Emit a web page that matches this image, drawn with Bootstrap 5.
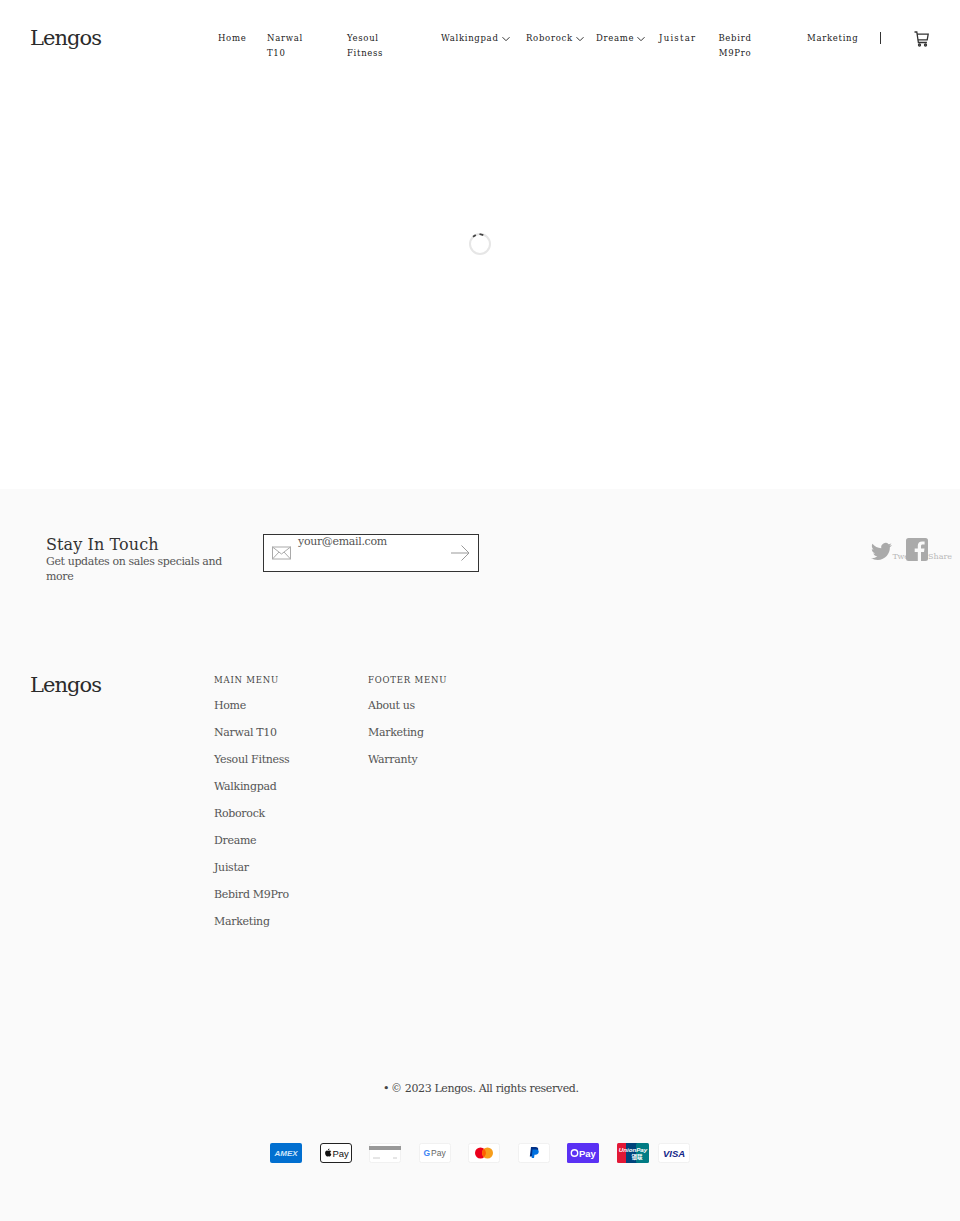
<!DOCTYPE html>
<html lang="en">
<head>
<meta charset="UTF-8">
<meta name="viewport" content="width=device-width, initial-scale=1.0">
<link href="https://cdn.jsdelivr.net/npm/bootstrap@5.3.0/dist/css/bootstrap.min.css" rel="stylesheet">
<title>Lengos</title>
<style>
body { font-family: "DejaVu Serif", "Liberation Serif", serif; color: #333; background: #fff; font-size: 12px; }
a { color: inherit; text-decoration: none; }
.site-head { height: 78px; padding: 0 30px; }
.brand-logo { font-size: 21px; line-height: 30px; color: #2b2b2b; letter-spacing: -0.95px; font-weight: 400; }
.site-head .brand-logo { margin-top: 23px; width: 188px; }
.main-menu { font-size: 8.5px; line-height: 15px; letter-spacing: .7px; margin-top: 31px; color: #222; }
.main-menu li { flex: none; }
.w-home { width: 49px; } .w-narwal { width: 80px; } .w-yesoul { width: 94px; } .w-walk { width: 85px; }
.w-robo { width: 70px; } .w-dream { width: 63px; } .w-juist { width: 59px; } .w-bebird { width: 89px; } .w-market { width: 73px; }
.w-narwal a, .w-yesoul a { display: block; width: 48px; }
.w-bebird a { display: block; width: 34px; text-align: center; }
.w-juist a { letter-spacing: 1.25px; }
.menu-caret { width: 8px; height: 8px; margin-left: 3px; }
.head-rule { width: 1px; height: 12px; background: #333; margin-top: 32px; }
.cart-link { margin: 30px 0 0 33px; }
.loader-area { height: 411px; padding-top: 154px; }
.site-foot { background: #fafafa; height: 732px; }
.touch-row { padding: 45px 8px 0 46px; height: 181px; }
.touch-copy { width: 217px; }
.touch-title { font-size: 16px; letter-spacing: .1px; line-height: 19px; margin: 1px 0 0; font-weight: 400; color: #333; }
.touch-sub { font-size: 11px; letter-spacing: -.38px; line-height: 15px; color: #555; margin: 0; max-width: 185px; }
.mail-box { width: 216px; height: 38px; border: 1px solid #333; background: #fff; padding: 0 8px; }
.mail-text { font-size: 11px; letter-spacing: -.33px; line-height: 12px; margin: 1px 0 0 7px; color: #555; flex: 1; }
.share-box { margin-top: 4px; }
.tw-icon { margin-top: 3px; }
.share-text { font-size: 8px; color: #b8b8b8; margin-top: 13px; }
.fb-icon { margin-left: -11px; }
.link-row { padding: 0 30px; height: 411px; }
.foot-brand { width: 184px; margin-top: 0; }
.foot-col { width: 154px; margin-top: 4px; }
.foot-col h6 { font-size: 8.5px; letter-spacing: .8px; line-height: 12px; margin: 0 0 6px; font-weight: 400; color: #444; text-transform: uppercase; }
.foot-col li { font-size: 11px; letter-spacing: -.3px; line-height: 27px; color: #555; }
.copy-row { list-style: none; padding-left: 391px; margin: 1px 0 47px; font-size: 11px; letter-spacing: -.37px; line-height: 14px; color: #444; }
.copy-row li::before { content: "•"; display: inline-block; width: 8px; margin-left: -8px; }
.pay-row { padding-left: 270px; gap: 17.5px; }
.pay-row svg { width: 32px; height: 20px; display: block; flex: none; }
.pay-row .pay-visa { margin-left: -7.6px; }
</style>
</head>
<body>
<header class="site-head d-flex align-items-start">
  <a href="#" class="brand-logo">Lengos</a>
  <ul class="main-menu list-unstyled d-flex mb-0">
    <li class="w-home"><a href="#">Home</a></li>
    <li class="w-narwal"><a href="#">Narwal T10</a></li>
    <li class="w-yesoul"><a href="#">Yesoul Fitness</a></li>
    <li class="w-walk"><a href="#">Walkingpad<svg class="menu-caret" viewBox="0 0 8 8" fill="none" stroke="#333"><path d="M.5 2.2 4 5.7l3.5-3.5"/></svg></a></li>
    <li class="w-robo"><a href="#">Roborock<svg class="menu-caret" viewBox="0 0 8 8" fill="none" stroke="#333"><path d="M.5 2.2 4 5.7l3.5-3.5"/></svg></a></li>
    <li class="w-dream"><a href="#">Dreame<svg class="menu-caret" viewBox="0 0 8 8" fill="none" stroke="#333"><path d="M.5 2.2 4 5.7l3.5-3.5"/></svg></a></li>
    <li class="w-juist"><a href="#">Juistar</a></li>
    <li class="w-bebird"><a href="#">Bebird M9Pro</a></li>
    <li class="w-market"><a href="#">Marketing</a></li>
  </ul>
  <div class="head-rule"></div>
  <a href="#" class="cart-link">
    <svg width="15" height="17" viewBox="0 0 15 17" fill="none" stroke="#333" stroke-width="1.3"><path d="M.5 1h2.300l1.600 10.500h8.500"/><path d="M3 3.200h11.200l-1 5.600H3.900"/><circle cx="5.500" cy="14" r="1"/><circle cx="11.500" cy="14" r="1"/></svg>
  </a>
</header>

<main class="loader-area d-flex justify-content-center align-items-start">
  <svg width="24" height="24" viewBox="0 0 24 24" fill="none">
    <circle cx="12" cy="12" r="10" stroke="#e6e6e6" stroke-width="2"/>
    <path d="M5 4.800 7.800 3M11.500 2l3.800 1.200" stroke="#444" stroke-width="1.800"/>
  </svg>
</main>

<footer class="site-foot">
  <section class="touch-row d-flex align-items-start">
    <div class="touch-copy">
      <h2 class="touch-title">Stay In Touch</h2>
      <p class="touch-sub">Get updates on sales specials and more</p>
    </div>
    <form class="mail-box d-flex align-items-start">
      <svg class="mt-2" width="19" height="20" viewBox="0 0 19 20" fill="none" stroke="#aaa"><rect x=".5" y="4" width="18" height="12"/><path d="M.5 4 9.500 11l9-7M.5 16l6.500-7M18.500 16 12 9"/></svg>
      <span class="mail-text">your@email.com</span>
      <svg class="mt-2" width="20" height="20" viewBox="0 0 20 20" fill="none" stroke="#999"><path d="M1 10h18M11.500 2.500 19 10l-7.500 7.500"/></svg>
    </form>
    <div class="share-box d-flex ms-auto">
      <svg class="tw-icon" width="21" height="21" viewBox="0 0 24 24" fill="#aaa"><path d="M23.953 4.57a10 10 0 01-2.825.775 4.958 4.958 0 002.163-2.723c-.951.555-2.005.959-3.127 1.184a4.92 4.92 0 00-8.384 4.482C7.69 8.095 4.067 6.13 1.64 3.162a4.822 4.822 0 00-.666 2.475c0 1.71.87 3.213 2.188 4.096a4.904 4.904 0 01-2.228-.616v.06a4.923 4.923 0 003.946 4.827 4.996 4.996 0 01-2.212.085 4.936 4.936 0 004.604 3.417 9.867 9.867 0 01-6.102 2.105c-.39 0-.779-.023-1.17-.067a13.995 13.995 0 007.557 2.209c9.053 0 13.998-7.496 13.998-13.985 0-.21 0-.42-.015-.63A9.935 9.935 0 0024 4.59z"/></svg>
      <span class="share-text">Tweet</span>
      <svg class="fb-icon" width="22" height="23" viewBox="0 0 22 23"><rect width="22" height="23" rx="2.500" fill="#aaa"/><path d="M15 23v-9h3l.5-3.500H15V8.300c0-1 .4-1.700 1.800-1.700h1.800V3.500c-.4 0-1.400-.1-2.500-.1-2.600 0-4.300 1.500-4.300 4.400v2.700H8.700V14h3.100v9z" fill="#fafafa"/></svg>
      <span class="share-text">Share</span>
    </div>
  </section>

  <section class="link-row d-flex align-items-start">
    <a href="#" class="brand-logo foot-brand">Lengos</a>
    <div class="foot-col">
      <h6>Main menu</h6>
      <ul class="list-unstyled mb-0">
        <li>Home</li><li>Narwal T10</li><li>Yesoul Fitness</li><li>Walkingpad</li><li>Roborock</li><li>Dreame</li><li>Juistar</li><li>Bebird M9Pro</li><li>Marketing</li>
      </ul>
    </div>
    <div class="foot-col">
      <h6>Footer menu</h6>
      <ul class="list-unstyled mb-0">
        <li>About us</li><li>Marketing</li><li>Warranty</li>
      </ul>
    </div>
  </section>

  <ul class="copy-row"><li>© 2023 Lengos. All rights reserved.</li></ul>

  <div class="pay-row d-flex align-items-center">
    <svg viewBox="0 0 32 20"><rect width="32" height="20" rx="2" fill="#016fd0"/><text x="16" y="13" text-anchor="middle" font-family="Liberation Sans" font-size="8" font-weight="700" font-style="italic" fill="#cfe6fb">AMEX</text></svg>
    <svg viewBox="0 0 32 20"><rect x=".5" y=".5" width="31" height="19" rx="2.500" fill="#fff" stroke="#222"/><path d="M8.900 7.200c.5-.7.500-1.300.5-1.700-.7.100-1.300.6-1.500 1.700zM9.600 7.600c-.6 0-1 .3-1.300.3s-.8-.3-1.300-.3c-1 0-1.900 1-1.900 2.500 0 1.600 1 3.400 1.900 3.400.5 0 .8-.3 1.300-.3s.7.300 1.300.3c.8 0 1.500-1.300 1.700-2.200-1.400-.6-1.400-2.600 0-3-.4-.5-1-.7-1.700-.7z" fill="#111"/><text x="12.500" y="13.500" font-family="Liberation Sans" font-size="9.500" fill="#111">Pay</text></svg>
    <svg viewBox="0 0 32 20"><rect x=".5" y=".5" width="31" height="19" rx="2" fill="#fff" stroke="#f1f1f1"/><rect y="3" width="32" height="4" fill="#999"/><path d="M4 15h7M24 15h4" stroke="#ccc"/></svg>
    <svg viewBox="0 0 32 20"><rect x=".5" y=".5" width="31" height="19" rx="2" fill="#fff" stroke="#f1f1f1"/><text x="4.500" y="13" font-family="Liberation Sans" font-size="8.500" font-weight="700" fill="#4285f4">G</text><text x="12" y="13" font-family="Liberation Sans" font-size="8.500" fill="#666">Pay</text></svg>
    <svg viewBox="0 0 32 20"><rect x=".5" y=".5" width="31" height="19" rx="2" fill="#fff" stroke="#f1f1f1"/><circle cx="12.500" cy="10" r="5.500" fill="#eb001b"/><circle cx="19.500" cy="10" r="5.500" fill="#f79e1b"/><path d="M16 5.800a5.500 5.500 0 010 8.400 5.500 5.500 0 010-8.400z" fill="#ff5f00"/></svg>
    <svg viewBox="0 0 32 20"><rect x=".5" y=".5" width="31" height="19" rx="2" fill="#fff" stroke="#f1f1f1"/><path d="M13 4h4.500c2 0 3 1 2.700 2.800-.3 2-1.700 3-3.700 3H15l-.6 3.800h-2.600z" fill="#003087"/><path d="M14.500 6.500h4c1.700 0 2.500 1 2.200 2.500-.3 1.800-1.500 2.800-3.200 2.800h-1l-.5 3.200h-2.300z" fill="#0070e0"/></svg>
    <svg viewBox="0 0 32 20"><rect width="32" height="20" rx="1.500" fill="#5a31f4"/><circle cx="7.500" cy="10" r="3.200" fill="none" stroke="#fff" stroke-width="1.400"/><text x="12" y="13.500" font-family="Liberation Sans" font-size="9.500" font-weight="700" fill="#fff">Pay</text></svg>
    <svg viewBox="0 0 32 20"><rect width="12" height="20" rx="1.500" fill="#e21836"/><rect x="9" width="12" height="20" fill="#00447c"/><rect x="19" width="13" height="20" rx="1.500" fill="#007b84"/><text x="16" y="9" text-anchor="middle" font-family="Liberation Sans" font-size="6.200" font-style="italic" font-weight="700" fill="#fff">UnionPay</text><text x="20" y="16" text-anchor="middle" font-family="Noto Sans CJK SC" font-size="5.500" font-weight="700" fill="#fff">银联</text></svg>
    <svg class="pay-visa" viewBox="0 0 32 20"><rect x=".5" y=".5" width="31" height="19" rx="2" fill="#fff" stroke="#f1f1f1"/><text x="16" y="13.500" text-anchor="middle" font-family="Liberation Sans" font-size="9.500" font-weight="700" font-style="italic" fill="#142688">VISA</text></svg>
  </div>
</footer>
</body>
</html>
